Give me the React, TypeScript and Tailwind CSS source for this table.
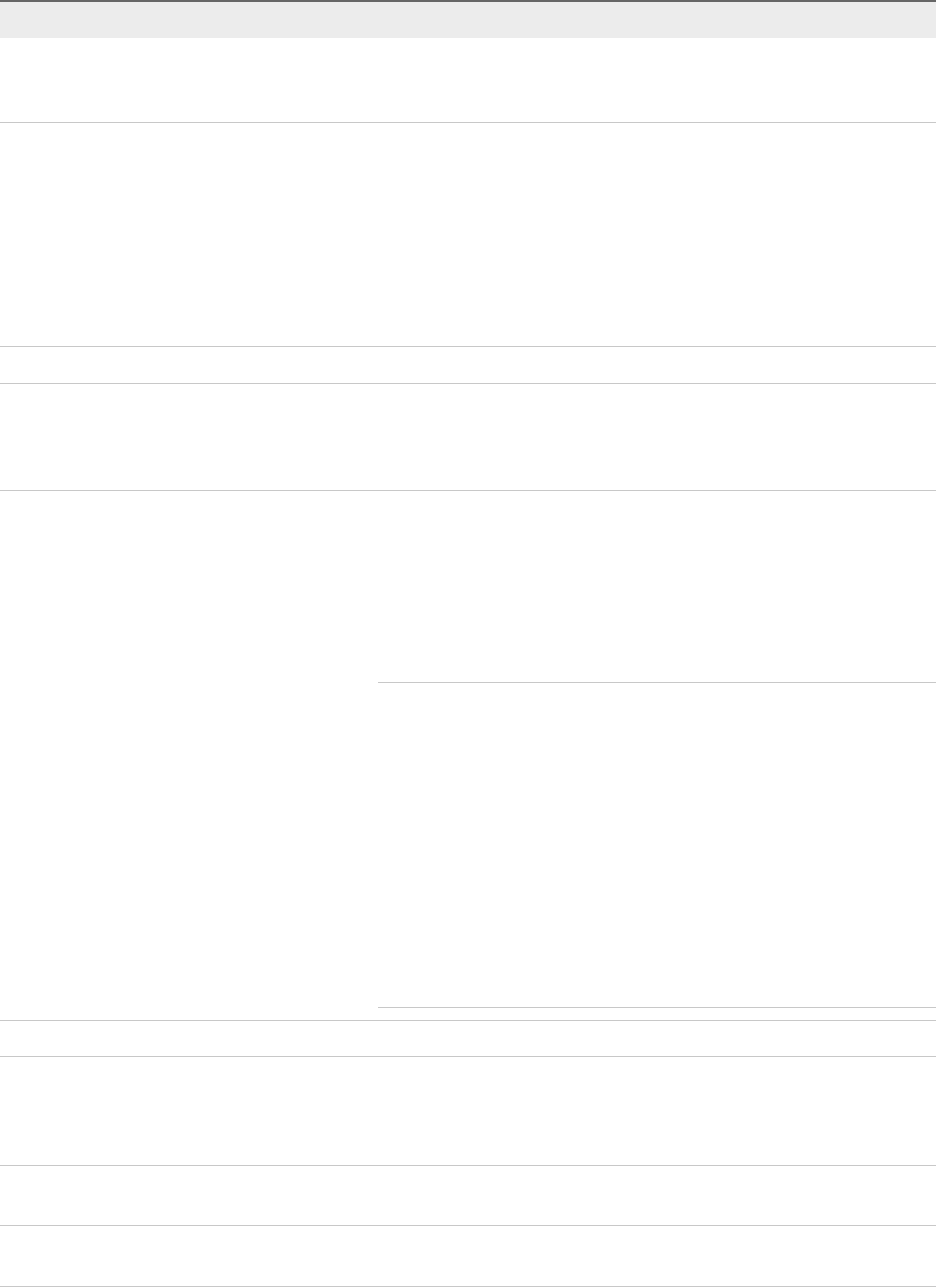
const Row = ({ h, children }: { h: string; children?: React.ReactNode }) => (
  <div className={`flex border-b border-[#c8c8c8] ${h}`}>{children}</div>
)

export default function App() {
  return (
    <div className="w-[936px] bg-white font-['Liberation_Sans',sans-serif] text-sm text-[#333]">
      {/* table header */}
      <div className="h-[38px] border-t-2 border-[#666666] bg-[#ececec]" />

      <Row h="h-[85px]" />
      <Row h="h-[224px]" />
      <Row h="h-[37px]" />
      <Row h="h-[107px]" />

      {/* row with nested sub-table */}
      <Row h="h-[530px]">
        <div className="w-[378px] shrink-0" />
        <div className="flex flex-1 flex-col pb-[12px]">
          <div className="h-[192px] border-b border-[#c8c8c8]" />
          <div className="h-[325px] border-b border-[#c8c8c8]" />
        </div>
      </Row>

      <Row h="h-[36px]" />
      <Row h="h-[109px]" />
      <Row h="h-[60px]" />
      <Row h="h-[61px]" />
    </div>
  )
}
